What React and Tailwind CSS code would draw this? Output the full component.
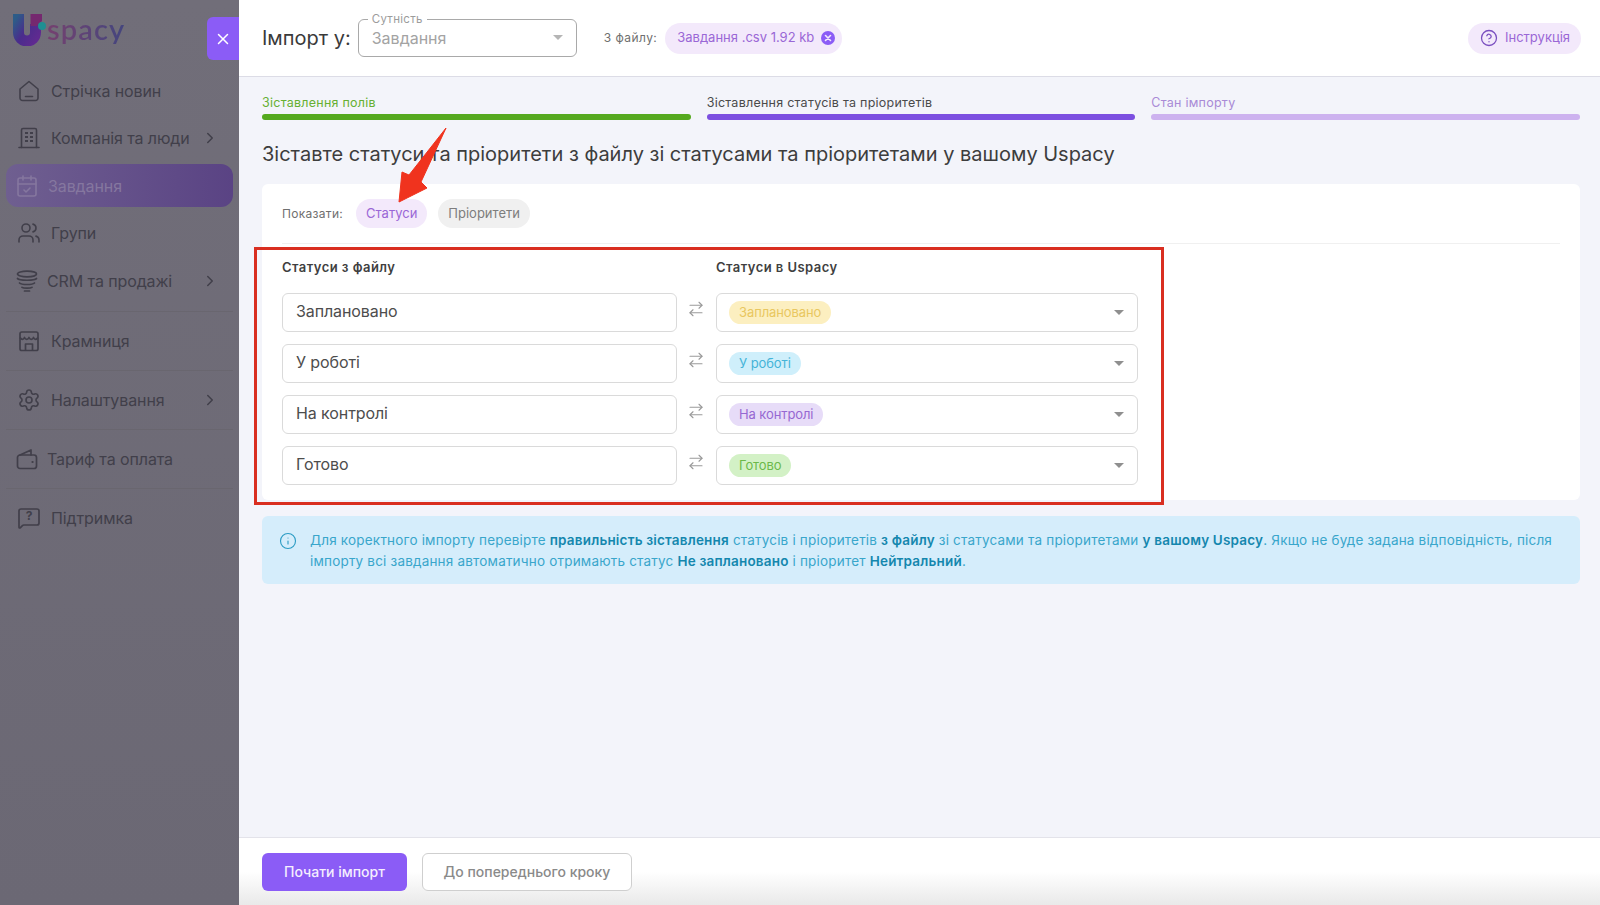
import React from 'react';
import {
  ArrowRightLeft,
  CalendarCheck,
  ChevronRight,
  CircleHelp,
  Info,
  MessageSquare,
  Settings,
  Users,
  X,
} from 'lucide-react';

function HomeIcon({ className }) {
  return (
    <svg viewBox="0 0 24 24" fill="none" stroke="currentColor" strokeWidth="1.6" strokeLinejoin="round" strokeLinecap="round" className={className}>
      <path d="M3 10 12 2.500l9 7.500v9a2.500 2.500 0 0 1-2.500 2.500h-13A2.500 2.500 0 0 1 3 19z" />
      <path d="M8.500 17.500h7" />
    </svg>
  );
}

function BuildingIcon({ className }) {
  return (
    <svg viewBox="0 0 24 24" fill="none" stroke="currentColor" strokeWidth="1.6" strokeLinecap="round" className={className}>
      <path d="M4.500 21.500V4a1.500 1.500 0 0 1 1.500-1.500h12A1.500 1.500 0 0 1 19.500 4v17.500" />
      <path d="M2 21.500h20" />
      <path d="M8 7h3M13 7h3M8 11h3M13 11h3M8 15h3M13 15h3" strokeWidth="2" strokeLinecap="butt" />
    </svg>
  );
}

function StackIcon({ className }) {
  return (
    <svg viewBox="0 0 24 24" fill="none" stroke="currentColor" strokeWidth="1.7" strokeLinecap="round" className={className}>
      <ellipse cx="12" cy="5" rx="9.500" ry="2.800" />
      <path d="M2.500 9.500c1.500 2.300 17.500 2.300 19 0" />
      <path d="M4.500 14c2 2 13 2 15 0" />
      <path d="M7 18.300c1.500 1.200 8.500 1.200 10 0" />
      <path d="M9.500 22h5" />
    </svg>
  );
}

function StoreIcon({ className }) {
  return (
    <svg viewBox="0 0 24 24" fill="none" stroke="currentColor" strokeWidth="1.7" strokeLinejoin="round" className={className}>
      <rect x="3" y="3" width="18" height="18.500" rx="1.800" />
      <path d="M3 8.500c1.500 2.500 3.500 2.500 4.500 0 1 2.500 3.500 2.500 4.500 0 1 2.500 3.500 2.500 4.500 0 1 2.500 3 2.500 4.500 0" />
      <path d="M8.500 21.500v-6.500h7v6.500" />
    </svg>
  );
}

function WalletIcon({ className }) {
  return (
    <svg viewBox="0 0 24 24" fill="none" stroke="currentColor" strokeWidth="1.7" strokeLinejoin="round" strokeLinecap="round" className={className}>
      <rect x="2.500" y="8" width="19" height="13.500" rx="2.500" />
      <path d="M5 8l11-5v5" />
      <path d="M17.500 15h.1" strokeWidth="2.200" />
    </svg>
  );
}

function SupportIcon({ className }) {
  return (
    <div className={`relative ${className}`}>
      <MessageSquare className="w-full h-full" strokeWidth={1.7} />
      <span className="absolute inset-0 flex items-center justify-center pb-[3px] text-[12px] font-bold leading-none">?</span>
    </div>
  );
}

function Logo() {
  return (
    <div className="flex items-end h-[32px]">
      <svg viewBox="0 0 34 32" className="w-[34px] h-[32px] shrink-0">
        <defs>
          <linearGradient id="logoU" x1="0" y1="0" x2="1" y2="1">
            <stop offset="0" stopColor="#2d5c88" />
            <stop offset="0.5" stopColor="#4a2c8c" />
            <stop offset="1" stopColor="#5f2a90" />
          </linearGradient>
        </defs>
        <path d="M5.500 0v18.500a8.500 8.500 0 0 0 17 0V10" fill="none" stroke="url(#logoU)" strokeWidth="11" />
        <path d="M17.500 0h11.500v7l-5 5h-6.500z" fill="#75286f" />
        <circle cx="29" cy="12" r="4" fill="#1f8f92" />
      </svg>
      <span className="mb-[2px] text-[29px] leading-[30px] font-semibold tracking-[1.1px] text-transparent bg-clip-text bg-gradient-to-r from-[#75406f] to-[#43457e] font-['Lato',sans-serif]">spacy</span>
    </div>
  );
}

const topNav = [
  { label: 'Стрічка новин', icon: HomeIcon },
  { label: 'Компанія та люди', icon: BuildingIcon, more: true },
  { label: 'Завдання', icon: CalendarCheck, active: true },
  { label: 'Групи', icon: Users },
  { label: 'CRM та продажі', icon: StackIcon, more: true, tight: true },
];

const bottomNav = [
  { label: 'Крамниця', icon: StoreIcon },
  { label: 'Налаштування', icon: Settings, more: true },
  { label: 'Тариф та оплата', icon: WalletIcon, tight: true },
  { label: 'Підтримка', icon: SupportIcon },
];

function NavRow({ item }) {
  const Icon = item.icon;
  return (
    <div
      className={`flex items-center h-[43px] rounded-[12px] ${
        item.active
          ? 'bg-gradient-to-r from-[#6f5f90] to-[#5a4384] text-[#85779f] pl-[9px] gap-[9px]'
          : item.tight
            ? 'text-[#413f4a] pl-[9px] gap-[8px]'
            : 'text-[#413f4a] pl-[11px] gap-[10px]'
      }`}
    >
      <Icon className="w-[24px] h-[24px] shrink-0" strokeWidth={1.6} />
      <span className="text-[16px] tracking-[-0.1px] whitespace-nowrap">{item.label}</span>
      {item.more && <ChevronRight className="w-[18px] h-[18px] ml-auto mr-[14px]" strokeWidth={2} />}
    </div>
  );
}

function Sidebar() {
  return (
    <aside className="relative w-[239px] shrink-0 bg-gradient-to-b from-[#716e79] to-[#6b6874]">
      <div className="flex justify-between h-[67px] pl-[13px]">
        <div className="pt-[14px]">
          <Logo />
        </div>
        <button className="mt-[17px] w-[32px] h-[43px] flex items-center justify-center bg-[#8b5cf6] rounded-l-[6px] text-white">
          <X className="w-[18px] h-[18px]" strokeWidth={2} />
        </button>
      </div>
      <div className="px-[6px]">
        {topNav.map((item) => (
          <div key={item.label} className="h-[47.500px] flex flex-col justify-center">
            <NavRow item={item} />
          </div>
        ))}
      </div>
      <div className="mt-[6px] px-[6px]">
        {bottomNav.map((item) => (
          <div key={item.label} className="h-[59px] flex flex-col justify-center border-t border-[#69666f]">
            <NavRow item={item} />
          </div>
        ))}
      </div>
    </aside>
  );
}

function Caret({ className }) {
  return <div className={`w-0 h-0 border-x-[5px] border-x-transparent border-t-[5px] ${className}`} />;
}

function Header() {
  return (
    <header className="h-[77px] shrink-0 flex items-center bg-white border-b border-[#dcdce6] pl-[23px] pr-[19px]">
      <span className="text-[20px] text-[#3a3a3a]">Імпорт у:</span>
      <div className="relative ml-[7px] w-[219px] h-[38px] mt-[-1px] flex items-center justify-between border border-[#a9a9a9] rounded-[6px] pl-[13px] pr-[13px]">
        <span className="absolute -top-[8px] left-[9px] bg-white px-[4px] text-[11.500px] leading-[14px] tracking-[0.3px] text-[#9c9c9c]">Сутність</span>
        <span className="text-[16px] text-[#a3a3a3]">Завдання</span>
        <Caret className="border-t-[#b5b5b5]" />
      </div>
      <span className="ml-[27px] text-[12px] tracking-[0.45px] text-[#6f6f6f]">З файлу:</span>
      <div className="ml-[8px] h-[31px] w-[177px] flex items-center justify-between rounded-full bg-[#f3e9fb] pl-[12px] pr-[6px]">
        <span className="text-[13px] text-[#9a67d6] whitespace-nowrap">Завдання .csv 1.92 kb</span>
        <svg viewBox="0 0 16 16" className="w-[16px] h-[16px] shrink-0">
          <circle cx="8" cy="8" r="7" fill="#8b5cf6" />
          <path d="m5.500 5.500 5 5m0-5-5 5" stroke="#f3e9fb" strokeWidth="1.6" strokeLinecap="round" />
        </svg>
      </div>
      <div className="ml-auto h-[31px] w-[113px] flex items-center gap-[7px] rounded-full bg-[#f3e9fb] pl-[12px]">
        <CircleHelp className="w-[18px] h-[18px] text-[#7a4fc0]" strokeWidth={1.7} />
        <span className="text-[13px] text-[#9a67d6]">Інструкція</span>
      </div>
    </header>
  );
}

const steps = [
  { label: 'Зіставлення полів', text: 'text-[#66b032]', bar: 'bg-[#55a91f]' },
  { label: 'Зіставлення статусів та пріоритетів', text: 'text-[#4a4a4a]', bar: 'bg-[#7c4fe0]' },
  { label: 'Стан імпорту', text: 'text-[#a98ad6]', bar: 'bg-[#cdb2ef]' },
];

const rows = [
  { name: 'Заплановано', chip: 'bg-[#fcefc0] text-[#e9c75f]' },
  { name: 'У роботі', chip: 'bg-[#cfeffb] text-[#45b4d8]' },
  { name: 'На контролі', chip: 'bg-[#e7dcf8] text-[#9668d2]' },
  { name: 'Готово', chip: 'bg-[#d3f1c6] text-[#6cb94a]' },
];

function MappingRow({ row }) {
  return (
    <div className="flex items-center">
      <div className="w-[395px] h-[39px] flex items-center border border-[#dadada] rounded-[6px] pl-[13px] pb-[3px] text-[16px] tracking-[-0.1px] text-[#4d4d4d]">
        {row.name}
      </div>
      <div className="w-[39px] flex justify-center">
        <ArrowRightLeft className="w-[18px] h-[18px] -mt-[8px] -ml-[2px] text-[#9a9a9a]" strokeWidth={1.500} />
      </div>
      <div className="w-[422px] h-[39px] flex items-center justify-between border border-[#dadada] rounded-[6px] pl-[12px] pr-[13px]">
        <span className={`h-[23px] flex items-center rounded-full px-[10px] text-[13px] tracking-[-0.1px] ${row.chip}`}>{row.name}</span>
        <Caret className="border-t-[#8f8f8f]" />
      </div>
    </div>
  );
}

function Annotations() {
  return (
    <>
      <div className="absolute left-[15px] top-[170px] w-[910px] h-[258px] border-[3px] border-[#d92e20] pointer-events-none" />
      <svg viewBox="0 0 80 90" className="absolute left-[152px] top-[48px] w-[80px] h-[90px] pointer-events-none">
        <path d="M55 3 30 57l6 6L8 77l3-30 7 3z" fill="#f0331e" stroke="#f0331e" strokeLinejoin="round" />
      </svg>
    </>
  );
}

function Content() {
  return (
    <div className="relative flex-1 bg-[#f3f4fa] pl-[23px] pr-[20px] pt-[18px] overflow-hidden">
      <div className="grid grid-cols-3 gap-[16px]">
        {steps.map((s) => (
          <div key={s.label}>
            <div className={`text-[12.500px] leading-[16px] tracking-[0.25px] ${s.text}`}>{s.label}</div>
            <div className={`mt-[3px] h-[6px] rounded-full ${s.bar}`} />
          </div>
        ))}
      </div>
      <h1 className="mt-[20px] text-[20px] leading-[28px] text-[#3d3d3d] font-normal">
        Зіставте статуси та пріоритети з файлу зі статусами та пріоритетами у вашому Uspacy
      </h1>
      <div className="mt-[16px] h-[316px] bg-white rounded-[6px] px-[20px]">
        <div className="h-[60px] flex items-center border-b border-[#f0f0f0]">
          <span className="text-[12px] tracking-[0.3px] text-[#6f6f6f]">Показати:</span>
          <span className="ml-[13px] h-[29px] flex items-center rounded-full bg-[#f3e9fb] px-[10px] text-[13px] text-[#9a67d6]">Статуси</span>
          <span className="ml-[11px] h-[29px] flex items-center rounded-full bg-[#f0f0f0] px-[10px] text-[13px] text-[#7d7d7d]">Пріоритети</span>
        </div>
        <div className="flex pt-[14px] h-[49px] text-[13px] font-semibold tracking-[0.45px] text-[#3f3f3f]">
          <span className="w-[434px]">Статуси з файлу</span>
          <span>Статуси в Uspacy</span>
        </div>
        <div className="flex flex-col gap-[12px]">
          {rows.map((row) => (
            <MappingRow key={row.name} row={row} />
          ))}
        </div>
      </div>
      <div className="mt-[16px] h-[68px] flex gap-[13px] rounded-[6px] bg-[#d5edfb] pl-[17px] pr-[20px] pt-[14px] text-[13.500px] leading-[21px] tracking-[0.19px] text-[#39a6cb]">
        <Info className="w-[18px] h-[18px] mt-[2px] shrink-0 text-[#2c9cc4]" strokeWidth={1.500} />
        <p>
          Для коректного імпорту перевірте <b className="font-semibold text-[#1487ae]">правильність зіставлення</b> статусів і пріоритетів{' '}
          <b className="font-semibold text-[#1487ae]">з файлу</b> зі статусами та пріоритетами{' '}
          <b className="font-semibold text-[#1487ae]">у вашому Uspacy</b>. Якщо не буде задана відповідність, після імпорту всі завдання автоматично отримають статус{' '}
          <b className="font-semibold text-[#1487ae]">Не заплановано</b> і пріоритет <b className="font-semibold text-[#1487ae]">Нейтральний</b>.
        </p>
      </div>
      <Annotations />
    </div>
  );
}

function Footer() {
  return (
    <footer className="h-[68px] shrink-0 flex gap-[15px] border-t border-[#e3e3ea] bg-gradient-to-b from-white from-50% to-[#e9e9e9] pl-[23px] pt-[15px]">
      <button className="w-[145px] h-[38px] pb-[2px] rounded-[6px] bg-[#8b5cf6] text-[14px] font-medium text-[#f5eefe]">Почати імпорт</button>
      <button className="w-[210px] h-[38px] pb-[2px] rounded-[6px] border border-[#cfcfcf] bg-white text-[14px] font-medium text-[#8a8a8a]">До попереднього кроку</button>
    </footer>
  );
}

export default function App() {
  return (
    <div className="flex h-screen overflow-hidden font-['Inter',sans-serif]">
      <Sidebar />
      <main className="flex-1 min-w-0 flex flex-col">
        <Header />
        <Content />
        <Footer />
      </main>
    </div>
  );
}
